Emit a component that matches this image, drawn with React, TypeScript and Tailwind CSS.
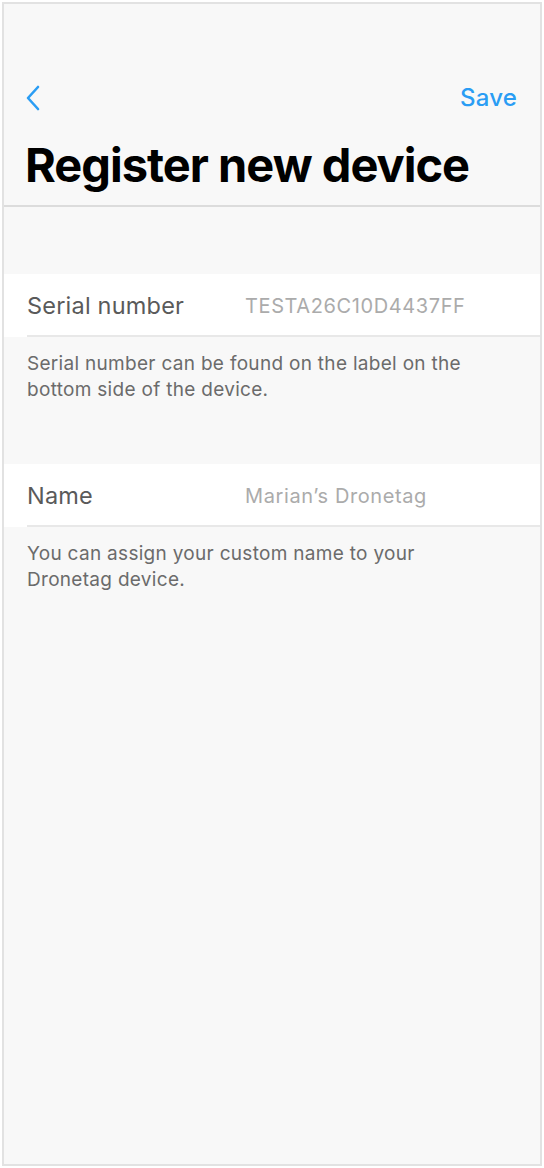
export default function App() {
  return (
    <div className="h-[1168px] w-[544px] bg-white p-[2px]" style={{ fontFamily: "Inter, 'Noto Sans', sans-serif" }}>
      <div className="flex h-full flex-col border-2 border-[#e2e2e2] bg-[#f8f8f8]">
        <header className="border-b-2 border-[#dcdcdc] px-[21px] pb-[12px] pt-[78px]">
          <div className="flex h-[32px] items-center justify-between">
            <svg width="20" height="28" viewBox="0 0 20 28" className="-ml-[1px]">
              <path d="M14 3 L4 14 L14 25" fill="none" stroke="#2a9df4" strokeWidth="2.6" strokeLinecap="round" strokeLinejoin="round" />
            </svg>
            <span className="mr-[2px] text-[24px] font-medium tracking-[0.2px] text-[#2a9df4]">Save</span>
          </div>
          <h1 className="mt-[23px] text-[47px] font-bold leading-[56px] tracking-[-1px] text-black">Register new device</h1>
        </header>

        <div className="h-[67px]" />

        <Field label="Serial number" value="TESTA26C10D4437FF" />
        <p className="max-w-[520px] px-[23px] pt-[14px] text-[19px] leading-[26px] tracking-[0.3px] text-[#6b6b6b]">
          Serial number can be found on the label on the bottom side of the device.
        </p>

        <div className="h-[61px]" />

        <Field label="Name" value="Marian’s Dronetag" />
        <p className="max-w-[520px] px-[23px] pt-[14px] text-[19px] leading-[26px] tracking-[0.3px] text-[#6b6b6b]">
          You can assign your custom name to your Dronetag device.
        </p>
      </div>
    </div>
  );
}

function Field({ label, value }: { label: string; value: string }) {
  return (
    <div className="bg-white pl-[23px]">
      <div className="flex h-[63px] items-center border-b-2 border-[#e8e8e8] pt-[3px]">
        <span className="w-[218px] text-[23.5px] tracking-[0.2px] text-[#5a5a5a]">{label}</span>
        <span className="text-[20px] tracking-[0.6px] text-[#ababab]">{value}</span>
      </div>
    </div>
  );
}
